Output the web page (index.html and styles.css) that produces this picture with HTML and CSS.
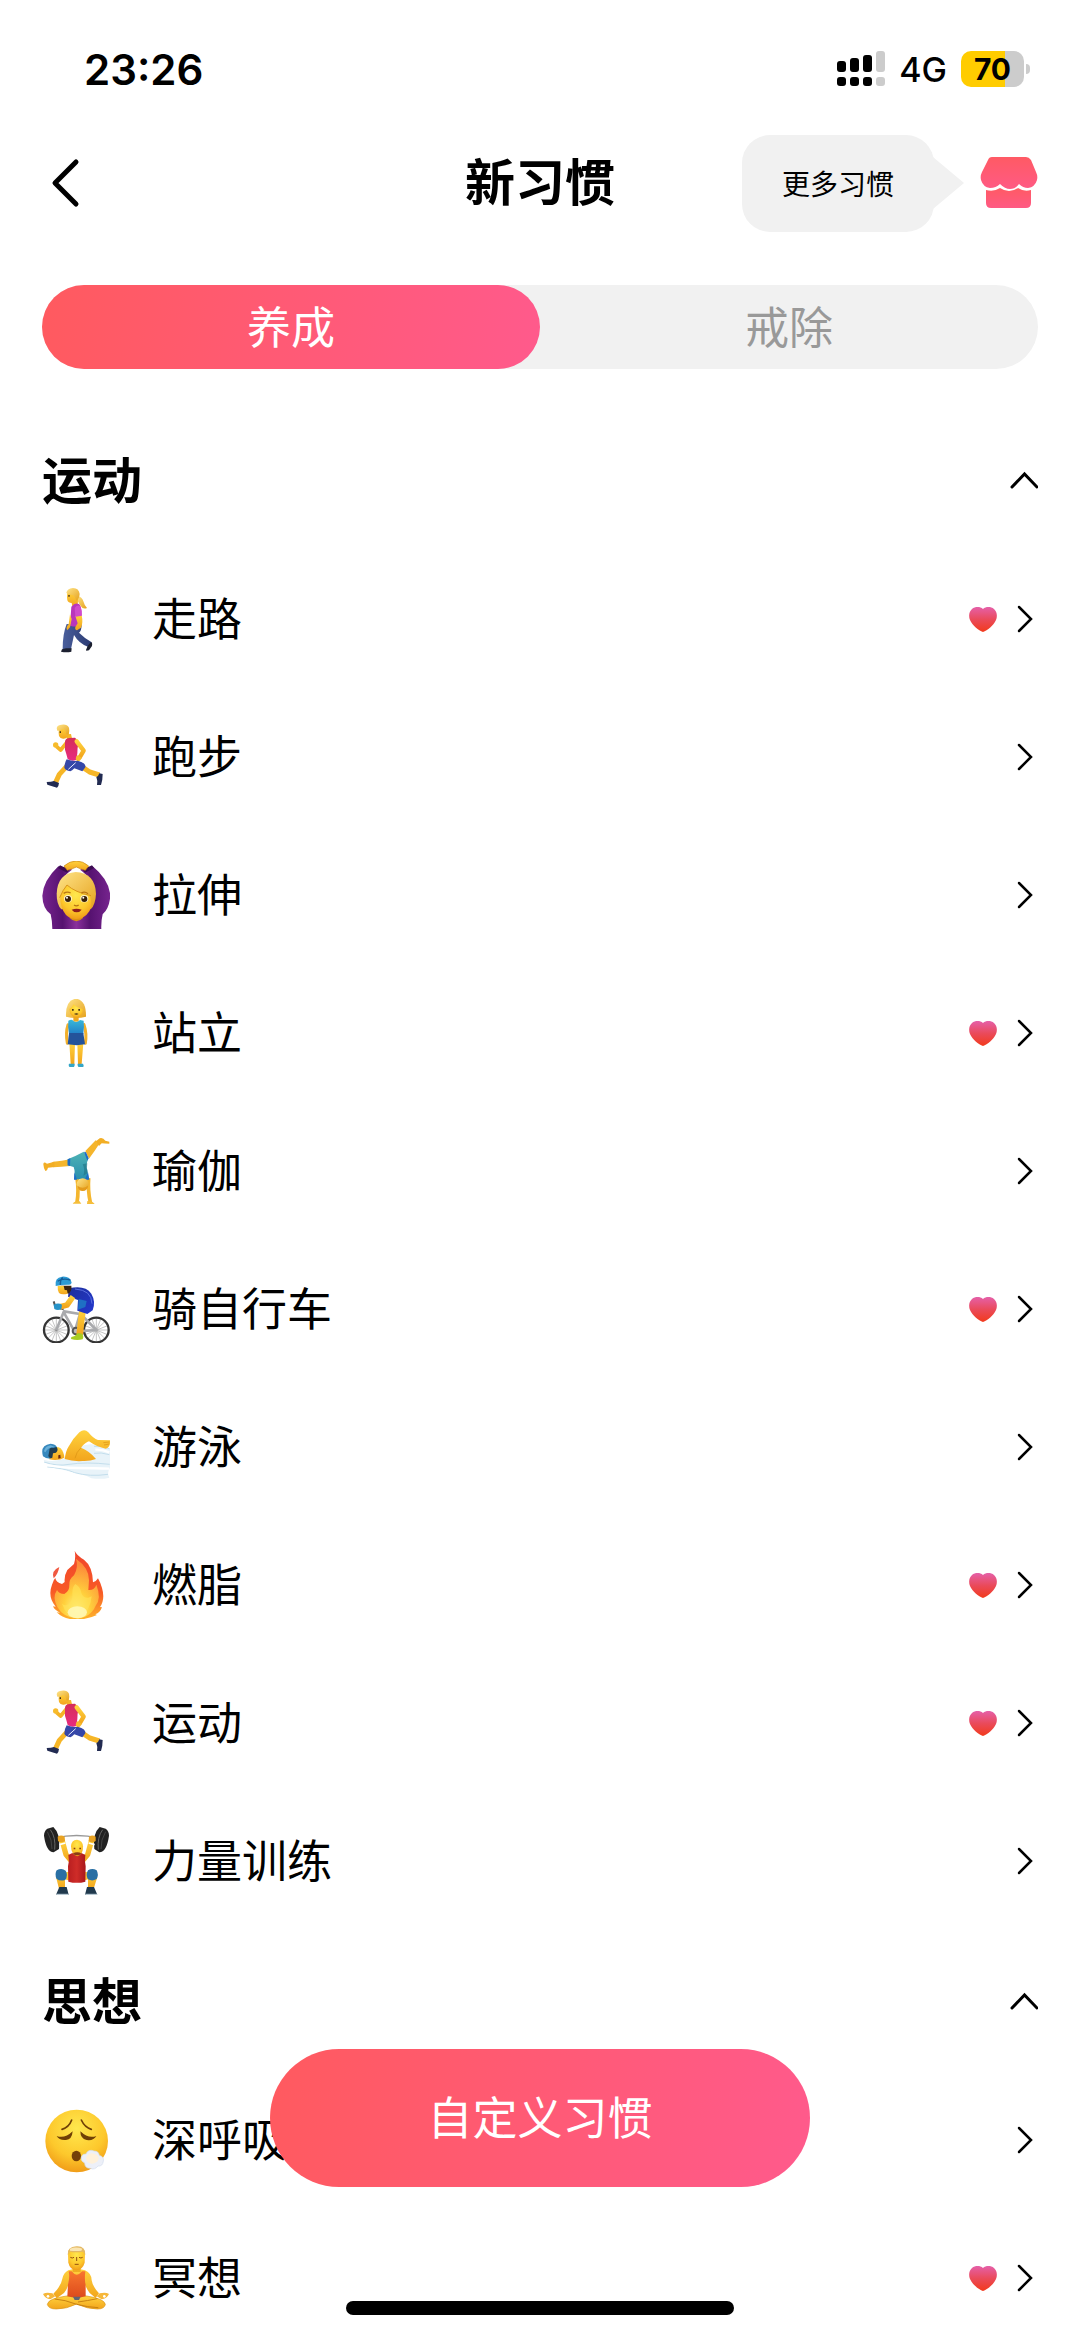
FILE: index.html
```html
<!DOCTYPE html>
<html lang="zh-CN">
<head>
<meta charset="utf-8">
<meta name="viewport" content="width=device-width, initial-scale=1">
<title>新习惯</title>
<link rel="stylesheet" href="styles.css">
</head>
<body>
<svg class="sprite" aria-hidden="true">
  <defs>
    <linearGradient id="skin" x1="0" y1="0" x2="0" y2="1"><stop offset="0" stop-color="#ffd23e"/><stop offset="1" stop-color="#f2a51c"/></linearGradient>
    <linearGradient id="hair" x1="0" y1="0" x2="1" y2="1"><stop offset="0" stop-color="#ffe58a"/><stop offset="1" stop-color="#e5a11c"/></linearGradient>
    <linearGradient id="purple" x1="0" y1="0" x2="1" y2="0"><stop offset="0" stop-color="#76248e"/><stop offset=".3" stop-color="#561270"/><stop offset=".5" stop-color="#8a309c"/><stop offset=".7" stop-color="#561270"/><stop offset="1" stop-color="#76248e"/></linearGradient>
    <linearGradient id="jeans" x1="0" y1="0" x2="1" y2="0"><stop offset="0" stop-color="#4a5f9c"/><stop offset="1" stop-color="#2b3a72"/></linearGradient>
    <linearGradient id="pink" x1="0" y1="0" x2="0" y2="1"><stop offset="0" stop-color="#d42e58"/><stop offset="1" stop-color="#e82a80"/></linearGradient>
    <linearGradient id="aqua" x1="0" y1="0" x2="0" y2="1"><stop offset="0" stop-color="#39b8d8"/><stop offset="1" stop-color="#2180c8"/></linearGradient>
    <linearGradient id="leotard" x1="0" y1="0" x2="0" y2="1"><stop offset="0" stop-color="#4fb3b5"/><stop offset="1" stop-color="#2a8fae"/></linearGradient>
    <linearGradient id="jersey" x1="0" y1="0" x2="1" y2="1"><stop offset="0" stop-color="#1e2f9a"/><stop offset="1" stop-color="#2338d0"/></linearGradient>
    <linearGradient id="flame" x1="0" y1="0" x2="0" y2="1"><stop offset="0" stop-color="#f0442c"/><stop offset=".6" stop-color="#f85a26"/><stop offset="1" stop-color="#ffb52a"/></linearGradient>
    <radialGradient id="flame-core" cx=".5" cy=".85" r=".75"><stop offset="0" stop-color="#fff38a"/><stop offset=".4" stop-color="#ffd03c"/><stop offset="1" stop-color="#fd8a3a"/></radialGradient>
    <linearGradient id="singlet" x1="0" y1="0" x2="1" y2="0"><stop offset="0" stop-color="#b81e20"/><stop offset=".5" stop-color="#cf2c28"/><stop offset="1" stop-color="#a8181c"/></linearGradient>
    <linearGradient id="orange" x1="0" y1="0" x2="0" y2="1"><stop offset="0" stop-color="#f8762e"/><stop offset="1" stop-color="#dc4a1c"/></linearGradient>
    <radialGradient id="face" cx=".5" cy=".3" r=".75"><stop offset="0" stop-color="#ffe84e"/><stop offset=".6" stop-color="#fdc82c"/><stop offset="1" stop-color="#ee9414"/></radialGradient>
    <linearGradient id="heart-fill" x1="0" y1="0" x2="0" y2="1"><stop offset="0" stop-color="#e560a8"/><stop offset=".5" stop-color="#ea4a5a"/><stop offset="1" stop-color="#f23a1c"/></linearGradient>
    <linearGradient id="shop-fill" x1="0" y1="0" x2="0" y2="1"><stop offset="0" stop-color="#ff5a64"/><stop offset="1" stop-color="#ff5a84"/></linearGradient>
  </defs>

  <symbol id="heart" viewBox="0 0 28 25"><path fill="url(#heart-fill)" d="M14 2C17-.6 22-.4 25 2c3 2.600 3.600 7 2 11-2.400 5.400-8.500 10.500-13 12C9.500 23.500 3.400 18.400 1 13-.6 9 0 4.600 3 2 6-.4 11-.6 14 2z"/></symbol>
  <symbol id="next" viewBox="0 0 28 36"><path fill="none" stroke="#000" stroke-width="2.500" stroke-linecap="round" d="M9 6 21 18 9 30"/></symbol>
  <symbol id="fold" viewBox="0 0 28 36"><path fill="none" stroke="#000" stroke-width="3" stroke-linecap="round" d="M2 24 14.500 11 27 24"/></symbol>

  <symbol id="walk" viewBox="66 72 204 204">
    <path fill="url(#hair)" d="M172 105q14 2 18 16 3 12 11 20-12 5-19-6-6-12-14-20z"/>
    <path fill="url(#skin)" d="M142 94q-2 14 0 24 3 8 13 8l2 10 16-4 2-28-14-14z"/>
    <path fill="url(#hair)" d="M139 96q2-13 20-15 18 0 20 18-1 14-10 20-3-12-10-17-8 0-20-6z"/>
    <path fill="#3a2a1a" d="M145 102h4v5h-4z"/>
    <path fill="url(#jeans)" d="M150 190h35q0 20-8 25 16 16 38 29l-10 14q-28-10-43-36l-9 42h-25q0-46 12-75z"/>
    <path fill="#1c2030" d="M126 265l12-3h17l-1 10q-15 3-31 0zM203 255l10-12q5 2 3 12l-9 13q-10 3-9-1z"/>
    <path fill="#b936ba" d="M154 137q12-14 24-7 7 9 5 24l-1 41q-16 4-32-1z"/>
    <path fill="url(#skin)" d="M166 165l19-3q5 24-2 38l-12 8q-7-1-5-10l7-11zM150 160l-4 30q-10 10-4 18l8-9 5-25z"/>
    <path fill="#cf4acb" d="M164 141q9-12 18-4 5 12 4 27l-20 3z"/>
  </symbol>

  <symbol id="run" viewBox="66 488 204 204">
    <path fill="none" stroke="#f5b326" stroke-width="11" stroke-linejoin="round" d="M143 543l-21 26-13-11"/>
    <circle cx="107" cy="554" r="8" fill="#f7bb2c"/>
    <path fill="none" stroke="#f6b627" stroke-width="15" stroke-linejoin="round" d="M142 616l-24 26-12 26M184 618l25 17 29 9"/>
    <path fill="#f5b52a" d="M139 522l14-1 4 17-16 1z"/>
    <path fill="url(#skin)" d="M117 505q-2 12 0 22 4 9 14 8 15-1 16-18l-4-16z"/>
    <path fill="url(#hair)" d="M112 511q-6-14 8-17 20-5 27 8 3 11-2 21l-7-2q0-13-10-15-6 6-16 5z"/>
    <path fill="#433018" d="M119 513h4v5h-4z"/>
    <path fill="url(#pink)" d="M135 545q0-10 12-12l18-1 12 12q-6 20-5 35l-3 20q-15 5-26-3-4-16-8-28z"/>
    <path fill="none" stroke="url(#skin)" stroke-width="13" stroke-linejoin="round" stroke-linecap="round" d="M170 543l21 28-12 20"/>
    <path fill="#f7bb2c" d="M171 585l14 6q-2 11-11 12-9-2-6-12z"/>
    <path fill="#3547a8" d="M140 597q20 8 33 4 26 7 23 20l-9 12-24-9q-7 7-12 9-15-3-18-11 1-16 7-25z"/>
    <path stroke="#e8ecff" stroke-width="3" d="M145 627l22-20"/>
    <path fill="#222b52" d="M80 665q14 0 22-3l15 6q-1 11-6 14l-29-9zM229 650q6-1 9-11l10 2q0 20-5 33h-12q3-11-2-24z"/>
  </symbol>

  <symbol id="stretch" viewBox="66 63 204 204">
    <path fill="url(#purple)" d="M97 268q0-25-5-45-24-18-25-56 3-46 48-88l34 6 19 12 20-12 30-6q49 40 53 88-3 38-23 56-5 20-4 45z"/>
    <path fill="#fff" d="M168 82q50 28 55 78-55 40-108 0 0-48 53-78z"/>
    <path fill="#3b0c50" d="M120 76l28 13-7 9-27-14zM216 76l-28 13 7 9 27-14z"/>
    <path fill="url(#skin)" stroke="#c98410" stroke-width="2" d="M132 78q17-15 37-15t37 15l-10 13q-15-4-27-10-12 6-27 10z"/>
    <path fill="url(#hair)" d="M110 162q2-62 57-66 59 3 61 66-2 34-16 46h-88q-14-14-14-46z"/>
    <path fill="#dc9212" d="M149 222h40v12q-20 20-40 0z"/>
    <path fill="url(#face)" d="M121 168q6-16 20-33 24 22 68 30 14 38-10 60-14 12-30 12-18 0-31-12-19-24-17-57z"/>
    <path fill="none" stroke="#d9951a" stroke-width="3" d="M141 135q24 22 72 32M141 135q-12 14-22 38"/>
    <ellipse cx="144" cy="176" rx="12" ry="11" fill="#fff2cc"/><ellipse cx="193" cy="176" rx="12" ry="11" fill="#fff2cc"/>
    <circle cx="144" cy="177" r="9" fill="#382008"/><circle cx="193" cy="177" r="9" fill="#382008"/>
    <circle cx="141" cy="173" r="3" fill="#fff"/><circle cx="190" cy="173" r="3" fill="#fff"/>
    <path fill="none" stroke="#b97512" stroke-width="4" d="M131 160q11-7 21-1M184 159q10-6 20 2M162 195q7 5 14 0"/>
    <path fill="#8e1d1d" d="M155 209q14-5 30 0-6 8-15 8t-15-8z"/>
  </symbol>

  <symbol id="stand" viewBox="66 478 204 204">
    <path fill="url(#hair)" d="M138 531q-2-50 30-54 31 4 30 54-30 8-60 0z"/>
    <path fill="#eda820" d="M160 528h16v18h-16z"/>
    <path fill="none" stroke="#f2b02c" stroke-width="9" stroke-linecap="round" d="M144 555q-8 24-2 56M192 555q9 26 4 56"/>
    <path fill="url(#skin)" d="M148 610h17l-2 63h-11zM172 610h18l-5 63h-11z"/>
    <path fill="url(#aqua)" d="M145 543q8-4 12-2 11 12 23 0l11 2q2 18-1 40h-43q-4-20-2-40z"/>
    <path fill="#24539a" d="M147 580h43l5 34q-25 5-52 0z"/>
    <path fill="url(#face)" d="M148 508q6-2 13-14 8 10 28 14-1 24-20 27-19-3-21-27z"/>
    <path fill="#473014" d="M156 508h5v5h-5zM175 508h5v5h-5zM162 523q7-4 14 0-7 4-14 0z"/>
    <path fill="#35a6c7" d="M147 672h17q1 11-7 12-14 0-10-12zM173 672h16q6 11-6 12-12 0-10-12z"/>
  </symbol>

  <symbol id="yoga" viewBox="66 54 204 204">
    <path fill="#f5b52c" d="M150 121v20q-26 3-50 4l-8-11 8-6q26-1 50-7zM196 96l31-32 12 9q-15 24-32 46z"/>
    <path fill="#f2ae25" d="M103 128l-22 6q-11-8-11 2 1 13 6 20l5-2 3-8 20-2zM228 67l11-9q10-3 17 7l12 3v6q-16 0-23-1l-8 8z"/>
    <path fill="none" stroke="#f4b62e" stroke-width="11" d="M171 177q6 38 0 73M206 177q-3 38 5 73"/>
    <path fill="#f5be3b" d="M158 254q6-9 20-8l6 8zM202 246q14-2 22 9h-23z"/>
    <path fill="url(#leotard)" d="M143 121q24-10 48-23l14 20q-9 24-3 35l4 28h-43q3-23-2-37l-18-5z"/>
    <path fill="#1c6cc8" d="M143 121l8-3-1 23-7-2zM192 98l6 2 8 18-4 7zM163 160l8 22h-9zM204 160l4 22h-13z"/>
    <path fill="#19697c" opacity=".5" d="M188 136q8 16 2 34l13-8q-4-16-1-29z"/>
    <circle cx="188" cy="196" r="18" fill="url(#hair)"/><path fill="#e49b1c" d="M172 200q16 12 32 0-1 15-16 16-14-1-16-16z"/>
  </symbol>

  <symbol id="bike" viewBox="66 468 204 204">
    <g fill="none" stroke="#8b8b8b" stroke-width="1.500"><path d="M109 597v72M73 633h72M84 608l50 50M134 608l-50 50M95 599l28 68M123 599l-28 68M75 620l68 27M75 647l68-27M229 597v72M193 633h72M204 608l50 50M254 608l-50 50M215 599l28 68M243 599l-28 68M195 620l68 27M195 647l68-27"/></g>
    <g fill="none" stroke="#353535" stroke-width="7"><circle cx="109" cy="633" r="37"/><circle cx="229" cy="633" r="37"/></g>
    <path fill="none" stroke="#a9aaad" stroke-width="8" stroke-linejoin="round" d="M109 633l23-56 48 8-16 53-34-60M164 638l65-5-47-48"/>
    <path fill="none" stroke="#555" stroke-width="6" d="M101 547l5 16 25 8"/>
    <circle cx="168" cy="636" r="13" fill="#555"/><circle cx="168" cy="636" r="7" fill="#bbb"/>
    <path fill="none" stroke="url(#skin)" stroke-width="20" d="M188 572l-4 30-5 45"/>
    <path fill="#a8cc22" d="M154 654q13-2 20-12l13 2q5 9 1 17-18 4-35-1z"/>
    <path fill="url(#jersey)" d="M147 508q48-11 67 16 14 24 4 50l-16 11-30-10 2-32-30-10z"/>
    <path fill="#1f6fc4" d="M176 540l24 6-4 18-22 8z"/>
    <path fill="none" stroke="#5a70e0" stroke-width="3" d="M165 510q50 3 51 44"/>
    <path fill="none" stroke="url(#skin)" stroke-width="17" stroke-linejoin="round" d="M159 533l-18 25-23 6"/>
    <path fill="#2793c8" d="M101 557q14-7 25 0l-2 14q-12 4-21-1z"/>
    <path fill="#3b2512" d="M122 500h32q3 15-9 24-13-4-23-24z"/><path fill="url(#skin)" d="M113 500l18 1 3 12 7 1 2 10q-18 4-26-2-5-10-4-22z"/>
    <path fill="#2d9bd5" d="M107 501q-4-25 19-28 25-2 29 18-2 8-11 6-20 0-37 4z"/><path fill="none" stroke="#155f99" stroke-width="4" d="M113 487q15-11 38-4M128 475q-8 9-7 23"/>
  </symbol>

  <symbol id="swim" viewBox="66 43 204 204">
    <path fill="#e8f3f9" d="M70 183q32 10 64-4 40-44 80-42 30 2 56 12v58q-10 14-2 30-22 6-54 2-26-14-60-18-64-8-84-38z"/>
    <path fill="none" stroke="#c3deec" stroke-width="3" d="M72 190q40 14 75 7 50-8 122 0M82 205q46 2 82 17 45 13 100 5M222 143q25-3 46 7M222 164q20-4 46 4"/>
    <path fill="none" stroke="#fff" stroke-width="7" d="M76 198q50 10 94 10 55 0 98 2M100 214q40 2 70 17M226 153q20-2 42 8"/>
    <path fill="url(#skin)" d="M134 181q4-26 11-36 13-25 33-44 15-12 27 0 15 19 29 23l36 1q2 20-13 25-25-4-50-22-10 2-24 19 26 10 45 34-18 7-40 6-29 2-54-6z"/>
    <path fill="none" stroke="#d99112" stroke-width="2" d="M183 147q-15 14-18 32M250 132l18-2M252 139l16-3"/>
    <path fill="url(#skin)" d="M88 152q20-12 34-3 10 11 11 28-18 10-45 5z"/>
    <path fill="#3788bd" d="M69 173q-10-34 23-38 17 1 20 14l-15 3-4 27q-12 3-24-6z"/><path fill="#69afd8" d="M72 158q3-16 20-18l13 5q-21 0-29 16z"/>
    <path fill="#213d50" d="M88 156q0-11 12-8l9-3q8 8-1 17l-9 2-2 13q-9 4-12-5z"/><path fill="#6b2810" d="M115 170l6-2 1 10-7 2z"/>
  </symbol>

  <symbol id="fire" viewBox="66 459 204 204">
    <path fill="url(#flame)" d="M164 458q5 14 28 27 26 20 27 68 10-3 15-12 8 14 12 29 10 34-6 57l6 1q-6 16-20 21l5 2q-30 14-65 14-36-2-56-22l10 1q-16-7-21-19l8 1q-25-30-11-66 4-15 10-20 2 14 20 18l8-6q-2-19 8-36l20-18q6-19 2-40z"/>
    <path fill="#f05840" d="M118 507q-4 22-17 34-8-23 17-34z"/>
    <path fill="url(#flame-core)" d="M168 482q40 28 39 65l-2 29q18 2 24-16 16 40-2 63-16 37-58 38-40-3-57-34-16-30-1-51 6 12 22 12 16-9 15-27-1-18 14-29 14-24 6-50z"/>
    <path fill="#ffe45a" opacity=".6" d="M166 558q14 7 18 26 4 16 21 15l10-4q-3 45-40 67-36-6-49-45 15 11 25-4 8-13 6-29 0-18 9-26z"/>
    <ellipse cx="172" cy="643" rx="29" ry="18" fill="#fffac0" opacity=".8"/>
  </symbol>

  <symbol id="lift" viewBox="66 450 204 204">
    <path fill="none" stroke="#999" stroke-width="4" d="M105 483q65-15 130 0"/>
    <path fill="#222" d="M82 455l18-5q22 20 17 66l-16 10q-22-1-29-50 0-14 10-21zM257 455l-18-5q-22 20-16 66l15 10q22-1 29-50 0-14-10-21z"/>
    <path fill="none" stroke="#666" stroke-width="3" d="M91 458q17 23 13 60M248 458q-17 23-13 60"/><path fill="none" stroke="#555" stroke-width="2" d="M82 464q15 24 14 52M257 464q-15 24-14 52"/>
    <path fill="none" stroke="url(#skin)" stroke-width="16" stroke-linejoin="round" d="M126 489l12 44 20 24M215 489l-12 44-20 24"/>
    <path stroke="#fff" stroke-width="5" d="M118 503l18-5M206 498l18 5"/>
    <path fill="#e9a322" d="M113 479q10-7 21 0l1 13q-12 8-21 0zM207 479q10-7 20 0v13q-10 8-21 0z"/>
    <path fill="url(#skin)" d="M108 600q25-20 62-14 38-6 62 14l-11 35h-17v-28q-34 14-69 0v28h-18z"/>
    <path fill="url(#singlet)" d="M145 534l12-6q13 14 27 0l12 6q-3 19 1 34l-1 46q-25 7-51 0l-1-46q5-15 1-34z"/>
    <path fill="url(#face)" d="M153 508q1-19 18-20 17 2 18 20 1 25-17 30-18-4-19-30z"/>
    <path fill="#8b3d16" d="M158 530q14-8 27 0-14 9-27 0zM161 512h5v5h-5zM178 512h5v5h-5z"/>
    <path fill="#296fa4" d="M110 580q15-8 27 1 8 14-1 27-14 6-26-2-7-14 0-26zM204 580q13-8 26 0 7 13 0 26-13 8-26 1-8-13 0-27z"/>
    <path fill="#20394d" d="M118 630h22l6 23q-18 3-38 0zM201 630h21l10 23q-19 4-37 0z"/><path stroke="#d8e7ee" stroke-width="3" d="M109 652h36M196 652h35"/>
  </symbol>

  <symbol id="breath" viewBox="66 438 204 204">
    <circle cx="170" cy="543" r="94" fill="url(#face)"/>
    <path fill="none" stroke="#704006" stroke-width="5" stroke-linecap="round" d="M155 480q-8 22-29 28M184 480q10 22 30 28"/>
    <path fill="#704006" d="M110 528q24 9 48-14-2 25-20 26-20 2-28-12zM181 514q24 23 48 14-8 15-29 12-19-4-19-26z"/>
    <ellipse cx="169" cy="588" rx="14" ry="16" fill="#754008"/>
    <path fill="#edf0f8" stroke="#d2dced" stroke-width="2" d="M184 591q4-11 14-9 7-16 24-9 14 0 16 13 15 5 12 17-2 17-16 15-10 13-23 7-17 0-17-16-13-6-10-18z"/>
    <path fill="#fff1da" d="M198 592q12-20 32-7 12 9 1 20-19 13-31-2z"/>
  </symbol>

  <symbol id="meditate" viewBox="66 855 204 204">
    <path fill="url(#skin)" d="M145 934q24-9 50 0 20 9 20 30 2 17 22 39l-10 14-18-15q-12-16-19-38h-42q-2 20-16 38l-22 16-10-14q23-22 27-45 4-18 18-25z"/>
    <path fill="#efad22" d="M158 915h24v24h-24z"/>
    <path fill="url(#skin)" stroke="#d99518" stroke-width="2" d="M82 1036q3-18 58-25h60q53 8 56 25-2 14-24 14-30 0-62-15-30 15-61 15-24 0-27-14z"/>
    <path fill="none" stroke="#c98212" stroke-width="3" d="M104 1020q30 2 66 16 34 9 65 10M174 1029q29-4 58-10"/>
    <path fill="#f6b73a" d="M69 1005q10-7 28-2l9 9-15 9q-15-1-22-16zM267 1005q-10-7-28-2l-9 9 15 9q15-1 22-16z"/><circle cx="84" cy="1012" r="4" fill="#fff"/><circle cx="253" cy="1012" r="4" fill="#fff"/>
    <path fill="url(#orange)" d="M146 937h9q15 20 31 0h10q-3 26 1 42v33q-27 8-55 0l2-36q6-20 2-39z"/><path fill="#606575" d="M159 1013h23l-5 10h-13z"/>
    <path fill="url(#face)" d="M144 880q0-13 25-13t26 13l-1 31q-6 21-25 23-19-2-24-23z"/>
    <path fill="#e4b964" d="M143 888q-2-24 26-26t27 26l-7-10q-21 3-39 0z"/><path fill="#fae6b4" d="M150 869q18-7 37 0l-3 6q-16 2-34 0z"/>
    <path fill="none" stroke="#94500f" stroke-width="3" d="M151 895q6 4 11 0M177 895q6 4 11 0M164 916h12M170 894v12"/>
  </symbol>
</svg>

<div class="app">
  <div class="status">
    <span class="time">23:26</span>
    <div class="indicators">
      <svg class="signal" viewBox="0 0 48 36" aria-hidden="true">
        <g fill="#000"><rect x="0" y="10" width="9" height="11" rx="3"/><rect x="13" y="7" width="9" height="14" rx="3"/><rect x="26" y="4" width="9" height="17" rx="3"/><rect x="0" y="26" width="9" height="9" rx="3"/><rect x="13" y="26" width="9" height="9" rx="3"/><rect x="26" y="26" width="9" height="9" rx="3"/></g>
        <g fill="#ccc"><rect x="39" y="0" width="9" height="21" rx="3"/><rect x="39" y="26" width="9" height="9" rx="3"/></g>
      </svg>
      <span class="network">4G</span>
      <div class="battery"><span class="level">70</span></div>
    </div>
  </div>

  <header class="header">
    <button class="icon-button back" type="button" aria-label="返回">
      <svg viewBox="0 0 42 60" aria-hidden="true"><path fill="none" stroke="#000" stroke-width="5" stroke-linecap="round" stroke-linejoin="round" d="M34 9 13 30l21 21"/></svg>
    </button>
    <h1 class="title">新习惯</h1>
    <div class="more">
      <a class="bubble" href="#more">更多习惯</a>
      <button class="icon-button shop" type="button" aria-label="习惯商店">
        <svg viewBox="0 0 58 54" aria-hidden="true">
          <path fill="url(#shop-fill)" d="M12 1h34q3 0 5 3l5 12q2 4 1 8-2 7-9 8-5 0-9-4-4 5-9 5t-10-5q-4 4-10 4-7-1-9-8-1-4 1-8l6-12q1-3 4-3z"/>
          <path fill="url(#shop-fill)" d="M6 34q8 2 14-2 9 6 18 0 6 4 13 2v13q0 5-5 5H11q-5 0-5-5z"/>
        </svg>
      </button>
    </div>
  </header>

  <div class="tabs" role="tablist">
    <button class="tab active" type="button" role="tab" aria-selected="true">养成</button>
    <button class="tab" type="button" role="tab" aria-selected="false">戒除</button>
  </div>

  <main class="content">
    <section class="group">
      <div class="group-head"><h2>运动</h2><button class="icon-button" type="button" aria-label="收起运动"><svg class="arrow" aria-hidden="true"><use href="#fold"/></svg></button></div>
      <a class="row" href="#walk"><svg class="emoji" aria-hidden="true"><use href="#walk"/></svg><span class="name">走路</span><svg class="heart" aria-hidden="true"><use href="#heart"/></svg><svg class="arrow" aria-hidden="true"><use href="#next"/></svg></a>
      <a class="row" href="#run"><svg class="emoji" aria-hidden="true"><use href="#run"/></svg><span class="name">跑步</span><svg class="arrow" aria-hidden="true"><use href="#next"/></svg></a>
      <a class="row" href="#stretch"><svg class="emoji" aria-hidden="true"><use href="#stretch"/></svg><span class="name">拉伸</span><svg class="arrow" aria-hidden="true"><use href="#next"/></svg></a>
      <a class="row" href="#stand"><svg class="emoji" aria-hidden="true"><use href="#stand"/></svg><span class="name">站立</span><svg class="heart" aria-hidden="true"><use href="#heart"/></svg><svg class="arrow" aria-hidden="true"><use href="#next"/></svg></a>
      <a class="row" href="#yoga"><svg class="emoji" aria-hidden="true"><use href="#yoga"/></svg><span class="name">瑜伽</span><svg class="arrow" aria-hidden="true"><use href="#next"/></svg></a>
      <a class="row" href="#bike"><svg class="emoji" aria-hidden="true"><use href="#bike"/></svg><span class="name">骑自行车</span><svg class="heart" aria-hidden="true"><use href="#heart"/></svg><svg class="arrow" aria-hidden="true"><use href="#next"/></svg></a>
      <a class="row" href="#swim"><svg class="emoji" aria-hidden="true"><use href="#swim"/></svg><span class="name">游泳</span><svg class="arrow" aria-hidden="true"><use href="#next"/></svg></a>
      <a class="row" href="#fire"><svg class="emoji" aria-hidden="true"><use href="#fire"/></svg><span class="name">燃脂</span><svg class="heart" aria-hidden="true"><use href="#heart"/></svg><svg class="arrow" aria-hidden="true"><use href="#next"/></svg></a>
      <a class="row" href="#sport"><svg class="emoji" aria-hidden="true"><use href="#run"/></svg><span class="name">运动</span><svg class="heart" aria-hidden="true"><use href="#heart"/></svg><svg class="arrow" aria-hidden="true"><use href="#next"/></svg></a>
      <a class="row" href="#lift"><svg class="emoji" aria-hidden="true"><use href="#lift"/></svg><span class="name">力量训练</span><svg class="arrow" aria-hidden="true"><use href="#next"/></svg></a>
    </section>
    <section class="group">
      <div class="group-head"><h2>思想</h2><button class="icon-button" type="button" aria-label="收起思想"><svg class="arrow" aria-hidden="true"><use href="#fold"/></svg></button></div>
      <a class="row" href="#breath"><svg class="emoji" aria-hidden="true"><use href="#breath"/></svg><span class="name">深呼吸</span><svg class="arrow" aria-hidden="true"><use href="#next"/></svg></a>
      <a class="row" href="#meditate"><svg class="emoji" aria-hidden="true"><use href="#meditate"/></svg><span class="name">冥想</span><svg class="heart" aria-hidden="true"><use href="#heart"/></svg><svg class="arrow" aria-hidden="true"><use href="#next"/></svg></a>
    </section>
  </main>

  <div class="dock">
    <button class="custom" type="button">自定义习惯</button>
    <div class="home-bar"></div>
  </div>
</div>
</body>
</html>
```
FILE: styles.css
```css
* {
  box-sizing: border-box;
}

body {
  margin: 0;
  background: #fff;
  color: #000;
  font-family: "Noto Sans CJK SC", "Noto Sans", sans-serif;
}

button {
  margin: 0;
  padding: 0;
  border: 0;
  background: none;
  color: inherit;
  font: inherit;
  cursor: pointer;
}

a {
  color: inherit;
  text-decoration: none;
}

svg {
  display: block;
}

.sprite {
  position: absolute;
  width: 0;
  height: 0;
}

.app {
  display: flex;
  flex-direction: column;
  height: 100vh;
  overflow: hidden;
}

/* Status bar */
.status {
  display: flex;
  flex: none;
  align-items: center;
  justify-content: space-between;
  height: 116px;
  padding: 22px 50px 0 84px;
  font-family: Inter, "Liberation Sans", sans-serif;
}

.time {
  font-size: 42px;
  font-weight: 600;
}

.indicators {
  display: flex;
  align-items: center;
}

.signal {
  width: 48px;
  height: 36px;
}

.network {
  margin: 0 14px;
  font-size: 34px;
  font-weight: 500;
}

.battery {
  position: relative;
  width: 63px;
  height: 36px;
  margin-right: 6px;
  border-radius: 10px;
  background: linear-gradient(90deg, #fc0 70%, #ccc 70%);
  font-size: 30px;
  font-weight: 700;
  line-height: 36px;
  text-align: center;
}

.battery::after {
  content: "";
  position: absolute;
  top: 13px;
  right: -6px;
  width: 4px;
  height: 10px;
  border-radius: 0 4px 4px 0;
  background: #ccc;
}

/* Header */
.header {
  display: grid;
  flex: none;
  grid-template-columns: 1fr auto 1fr;
  align-items: center;
  height: 134px;
  padding: 0 42px;
}

.back {
  width: 42px;
}

.title {
  margin: 0;
  padding-bottom: 8px;
  font-size: 50px;
  font-weight: 700;
  line-height: 72px;
}

.more {
  display: flex;
  align-items: center;
  justify-content: flex-end;
  gap: 46px;
}

.bubble {
  position: relative;
  padding: 28px 40px;
  border-radius: 28px;
  background: #f1f1f1;
  font-size: 28px;
  line-height: 41px;
  white-space: nowrap;
}

.bubble::after {
  content: "";
  position: absolute;
  top: 20px;
  left: calc(100% - 4px);
  width: 34px;
  height: 57px;
  background: #f1f1f1;
  clip-path: polygon(0 0, 100% 50%, 0 100%);
}

.shop {
  width: 58px;
}

/* Tabs */
.tabs {
  display: flex;
  flex: none;
  margin: 35px 42px 0;
  border-radius: 42px;
  background: #f1f1f1;
}

.tab {
  flex: 1;
  padding-bottom: 4px;
  border-radius: 42px;
  color: #999;
  font-size: 44px;
  line-height: 80px;
}

.tab.active {
  background: linear-gradient(100deg, #ff5a5f, #ff5a8c);
  color: #fff;
}

/* Habit list */
.content {
  flex: 1;
  min-height: 0;
  padding: 43px 42px 0;
  overflow-y: auto;
  scrollbar-width: none;
}

.group + .group {
  margin-top: 3px;
}

.group-head,
.row {
  display: flex;
  align-items: center;
  height: 138px;
}

.group-head {
  justify-content: space-between;
}

.group-head h2 {
  margin: 0;
  padding-bottom: 8px;
  font-size: 50px;
  font-weight: 700;
  line-height: 72px;
}

.emoji {
  flex: none;
  width: 68px;
  height: 68px;
}

.name {
  flex: 1;
  padding: 0 0 4px 42px;
  font-size: 45px;
  line-height: 64px;
}

.heart {
  width: 28px;
  height: 25px;
  margin-right: 13px;
}

.arrow {
  width: 28px;
  height: 36px;
}

/* Floating action and home indicator */
.dock {
  position: fixed;
  right: 0;
  bottom: 22px;
  left: 0;
  display: flex;
  flex-direction: column;
  align-items: center;
  gap: 114px;
}

.custom {
  width: 50%;
  padding-bottom: 4px;
  border-radius: 69px;
  background: linear-gradient(100deg, #ff5a5f, #ff5a8c);
  color: #fff;
  font-size: 45px;
  line-height: 134px;
}

.home-bar {
  width: 36%;
  height: 14px;
  border-radius: 7px;
  background: #000;
}
```
